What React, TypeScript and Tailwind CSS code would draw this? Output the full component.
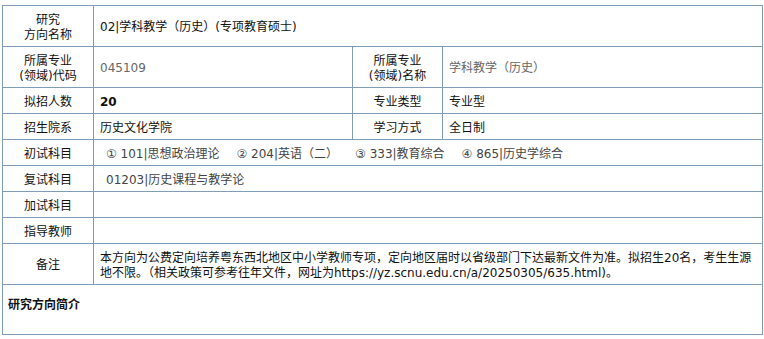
const B = "border border-[#7f9db9]";
const label = `${B} text-center align-middle leading-[15px] px-1 pt-[3px] pb-0`;
const value = `${B} text-left align-middle px-[6px] pt-[3px] pb-0 leading-[15px]`;

export default function App() {
  return (
    <div
      className="bg-white w-[764px] h-[339px] pt-[5px] pl-[2px] text-[12px] text-[#111]"
      style={{ fontFamily: '"DejaVu Sans", "Noto Sans CJK SC", sans-serif' }}
    >
      <table className="w-[760px] table-fixed border-collapse">
        <colgroup>
          <col className="w-[91px]" />
          <col className="w-[259px]" />
          <col className="w-[90px]" />
          <col className="w-[320px]" />
        </colgroup>
        <tbody>
          <tr className="h-[41px]">
            <td className={label}>
              研究
              <br />
              方向名称
            </td>
            <td className={value} colSpan={3}>
              02|学科教学（历史）(专项教育硕士)
            </td>
          </tr>
          <tr className="h-[41px]">
            <td className={label}>
              所属专业
              <br />
              (领域)代码
            </td>
            <td className={`${value} text-[#666]`}>045109</td>
            <td className={label}>
              所属专业
              <br />
              (领域)名称
            </td>
            <td className={`${value} text-[#666]`}>学科教学（历史）</td>
          </tr>
          <tr className="h-[26px]">
            <td className={label}>拟招人数</td>
            <td className={`${value} font-bold`}>20</td>
            <td className={label}>专业类型</td>
            <td className={value}>专业型</td>
          </tr>
          <tr className="h-[26px]">
            <td className={label}>招生院系</td>
            <td className={value}>历史文化学院</td>
            <td className={label}>学习方式</td>
            <td className={value}>全日制</td>
          </tr>
          <tr className="h-[26px]">
            <td className={label}>初试科目</td>
            <td className={`${value} pl-[12px] text-[#444]`} colSpan={3}>
              <span className="mr-[17px]">① 101|思想政治理论</span>
              <span className="mr-[17px]">② 204|英语（二）</span>
              <span className="mr-[17px]">③ 333|教育综合</span>
              <span>④ 865|历史学综合</span>
            </td>
          </tr>
          <tr className="h-[26px]">
            <td className={label}>复试科目</td>
            <td className={`${value} pl-[12px] text-[#444]`} colSpan={3}>
              01203|历史课程与教学论
            </td>
          </tr>
          <tr className="h-[26px]">
            <td className={label}>加试科目</td>
            <td className={value} colSpan={3}></td>
          </tr>
          <tr className="h-[26px]">
            <td className={label}>指导教师</td>
            <td className={value} colSpan={3}></td>
          </tr>
          <tr className="h-[41px]">
            <td className={label}>备注</td>
            <td className={value} colSpan={3}>
              本方向为公费定向培养粤东西北地区中小学教师专项，定向地区届时以省级部门下达最新文件为准。拟招生20名，考生生源地不限。（相关政策可参考往年文件，网址为https://yz.scnu.edu.cn/a/20250305/635.html)。
            </td>
          </tr>
          <tr className="h-[50px]">
            <td className={`${B} align-top pt-[11px] px-[5px] font-bold`} colSpan={4}>
              研究方向简介
            </td>
          </tr>
        </tbody>
      </table>
    </div>
  );
}
